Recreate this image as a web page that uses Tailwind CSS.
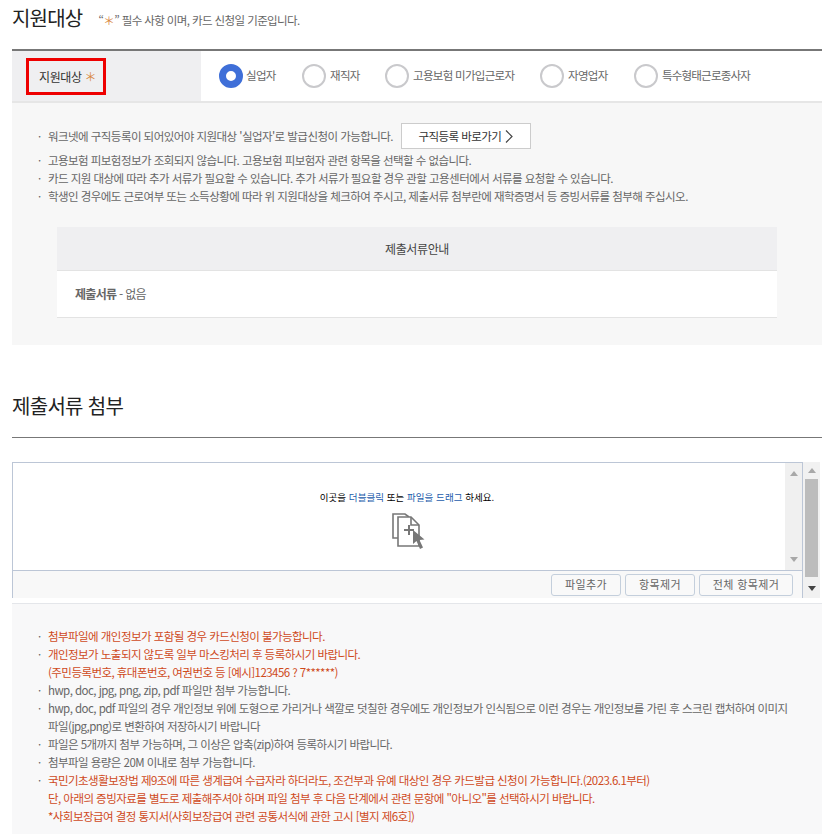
<!DOCTYPE html>
<html lang="ko">
  <head>
    <meta charset="UTF-8" />
    <title>지원대상</title>
    <script src="https://cdn.jsdelivr.net/npm/@tailwindcss/browser@4"></script>
  </head>
  <body class="bg-white font-['Noto_Sans_CJK_KR','Noto_Sans',sans-serif] text-[#666] overflow-hidden">
    <div class="w-[827px] h-[834px] overflow-hidden">
      <!-- 지원대상 -->
      <div class="h-[49px] pl-3 flex">
        <h2 class="text-[20px] leading-[36px] text-[#222] font-normal tracking-[-0.8px]">지원대상</h2>
        <p class="ml-[16px] text-[11.5px] leading-[40px] text-[#666] tracking-[-0.6px]">
          “<span class="text-[#d9883f]">＊</span>” 필수 사항 이며, 카드 신청일 기준입니다.
        </p>
      </div>
      <div class="ml-3 w-[810px] h-[54px] border-t-2 border-b-2 border-t-[#777] border-b-[#e6e6e6] flex">
        <div class="w-[189px] bg-[#efeff1] pl-[14px] pt-[7px]">
          <div class="w-[80px] h-[37px] border-[3px] border-[#ee0000] flex items-center pl-[10px] text-[12px] text-[#333] tracking-[-0.4px]">
            지원대상<span class="ml-[3px] text-[#d9883f]">＊</span>
          </div>
        </div>
        <div class="flex items-center pl-[18px] text-[11.5px] text-[#666] tracking-[-0.7px]">
          <span class="w-6 h-6 rounded-full border-[7px] border-[#3f6fd8] bg-white"></span>
          <span class="ml-[3px] w-[56px]">실업자</span>
          <span class="w-6 h-6 rounded-full border-[2px] border-[#c9c9cc] bg-white"></span>
          <span class="ml-[4px] w-[55px]">재직자</span>
          <span class="w-6 h-6 rounded-full border-[2px] border-[#c9c9cc] bg-white"></span>
          <span class="ml-[4px] w-[127px]">고용보험 미가입근로자</span>
          <span class="w-6 h-6 rounded-full border-[2px] border-[#c9c9cc] bg-white"></span>
          <span class="ml-[4px] w-[66px]">자영업자</span>
          <span class="w-6 h-6 rounded-full border-[2px] border-[#c9c9cc] bg-white"></span>
          <span class="ml-[4px] tracking-[-0.8px]">특수형태근로종사자</span>
        </div>
      </div>
      <div class="ml-3 w-[810px] h-[242px] bg-[#f7f7f7] pt-[20px]">
        <ul class="pl-[25px] text-[11.5px] leading-[18px] text-[#666] tracking-[-0.55px]">
          <li class="flex items-center h-[26px] mb-[2px]">
            <span class="w-[11px] pl-[1px]">·</span>워크넷에 구직등록이 되어있어야 지원대상 '실업자'로 발급신청이 가능합니다.
            <span class="ml-[8px] w-[130px] h-[26px] border border-[#ccc] bg-white flex items-center justify-center text-[#333]">구직등록 바로가기
              <svg class="ml-1" width="8" height="13" viewBox="0 0 8 13" fill="none" stroke="#444" stroke-width="1.2"><path d="M1 .5l6 6-6 6" /></svg>
            </span>
          </li>
          <li class="flex"><span class="w-[11px] pl-[1px]">·</span>고용보험 피보험정보가 조회되지 않습니다. 고용보험 피보험자 관련 항목을 선택할 수 없습니다.</li>
          <li class="flex"><span class="w-[11px] pl-[1px]">·</span>카드 지원 대상에 따라 추가 서류가 필요할 수 있습니다. 추가 서류가 필요할 경우 관할 고용센터에서 서류를 요청할 수 있습니다.</li>
          <li class="flex"><span class="w-[11px] pl-[1px]">·</span>학생인 경우에도 근로여부 또는 소득상황에 따라 위 지원대상을 체크하여 주시고, 제출서류 첨부란에 재학증명서 등 증빙서류를 첨부해 주십시오.</li>
        </ul>
        <div class="ml-[45px] mt-[22px] w-[720px]">
          <div class="h-[44px] bg-[#efeff1] border-b border-[#e3e3e3] flex items-center justify-center text-[12px] text-[#444] tracking-[-0.4px]">제출서류안내</div>
          <div class="h-[47px] bg-white border-b border-[#e3e3e3] flex items-center pl-[18px] text-[12px] text-[#666] tracking-[-0.7px]">
            <b class="font-bold">제출서류</b>&nbsp;- 없음
          </div>
        </div>
      </div>

      <!-- 제출서류 첨부 -->
      <h2 class="mt-[45px] pl-3 text-[20px] leading-[32px] text-[#222] font-normal tracking-[-0.7px]">제출서류 첨부</h2>
      <div class="ml-3 mt-[15px] w-[810px] border-t border-[#777]"></div>

      <div class="ml-3 mt-[24px] w-[808px] h-[142px] flex">
        <div class="w-[791px] h-[136px] border-l border-t border-r border-[#bcc6d6] flex flex-col">
          <div class="h-[107px] flex">
            <div class="flex-1 flex flex-col items-center pt-[28px] pl-4">
              <p class="text-[9.5px] leading-[12px] text-black tracking-[0.05px]">이곳을 <span class="text-[#1c5cab]">더블클릭</span> 또는 <span class="text-[#1c5cab]">파일을 드래그</span> 하세요.</p>
              <svg class="mt-[9px] ml-[3px]" width="36" height="38" viewBox="0 0 36 38" fill="none" stroke="#777" stroke-width="1.6">
                <path d="M7 26H2V2h12l4 3" />
                <path d="M7 5h13l8 8v21H7z" fill="#fff" />
                <path d="M20 5v8h8" />
                <path d="M18 13v10M13 18h10" stroke-width="2" />
                <path d="M22 18l0 14 3.500-3 3.500 8 3-1.500-3.500-7.500 5-.5z" fill="#777" stroke="none" />
              </svg>
            </div>
            <div class="w-[17px] bg-[#f0f0f0] flex flex-col items-center justify-between py-[8px]">
              <span class="w-0 h-0 border-x-[4px] border-x-transparent border-b-[5px] border-b-[#a8a8a8]"></span>
              <span class="w-0 h-0 border-x-[4px] border-x-transparent border-t-[5px] border-t-[#a8a8a8]"></span>
            </div>
          </div>
          <div class="h-[28px] border-t border-[#bcc6d6] bg-[#f8f8f8] flex items-center justify-end gap-[4px] pr-[9px] text-[11px] text-[#666] tracking-[0.4px]">
            <span class="w-[70px] h-[22px] border border-[#c4cfdc] rounded-[3px] bg-[#f9f9f9] flex items-center justify-center">파일추가</span>
            <span class="w-[70px] h-[22px] border border-[#c4cfdc] rounded-[3px] bg-[#f9f9f9] flex items-center justify-center">항목제거</span>
            <span class="w-[94px] h-[22px] border border-[#c4cfdc] rounded-[3px] bg-[#f9f9f9] flex items-center justify-center">전체 항목제거</span>
          </div>
        </div>
        <div class="w-[17px] h-[136px] bg-[#f1f1f1] flex flex-col items-center pt-[6px]">
          <span class="w-0 h-0 border-x-[4px] border-x-transparent border-b-[5px] border-b-[#a8a8a8]"></span>
          <span class="mt-[6px] w-[13px] h-[98px] bg-[#bcbcbc]"></span>
          <span class="mt-[9px] w-0 h-0 border-x-[4px] border-x-transparent border-t-[5px] border-t-[#444]"></span>
        </div>
      </div>

      <div class="ml-3 -mt-[1px] w-[810px] h-[232px] bg-[#f8f8f9] border-t border-[#e4e6ea] pt-[23px] pl-[25px] text-[11.5px] leading-[18px] tracking-[-0.55px] text-[#666]">
        <p class="flex"><span class="w-[11px] pl-[1px]">·</span><span class="text-[#cf4a1c]">첨부파일에 개인정보가 포함될 경우 카드신청이 불가능합니다.</span></p>
        <p class="flex"><span class="w-[11px] pl-[1px]">·</span><span class="text-[#cf4a1c]">개인정보가 노출되지 않도록 일부 마스킹처리 후 등록하시기 바랍니다.</span></p>
        <p class="pl-[11px] text-[#cf4a1c]">(주민등록번호, 휴대폰번호, 여권번호 등 [예시]123456 ? 7******)</p>
        <p class="flex"><span class="w-[11px] pl-[1px]">·</span>hwp, doc, jpg, png, zip, pdf 파일만 첨부 가능합니다.</p>
        <p class="flex"><span class="w-[11px] pl-[1px]">·</span>hwp, doc, pdf 파일의 경우 개인정보 위에 도형으로 가리거나 색깔로 덧칠한 경우에도 개인정보가 인식됨으로 이런 경우는 개인정보를 가린 후 스크린 캡처하여 이미지</p>
        <p class="pl-[11px]">파일(jpg,png)로 변환하여 저장하시기 바랍니다</p>
        <p class="flex"><span class="w-[11px] pl-[1px]">·</span>파일은 5개까지 첨부 가능하며, 그 이상은 압축(zip)하여 등록하시기 바랍니다.</p>
        <p class="flex"><span class="w-[11px] pl-[1px]">·</span>첨부파일 용량은 20M 이내로 첨부 가능합니다.</p>
        <p class="flex"><span class="w-[11px] pl-[1px]">·</span><span class="text-[#cf4a1c]">국민기초생활보장법 제9조에 따른 생계급여 수급자라 하더라도, 조건부과 유예 대상인 경우 카드발급 신청이 가능합니다.(2023.6.1부터)</span></p>
        <p class="pl-[11px] text-[#cf4a1c]">단, 아래의 증빙자료를 별도로 제출해주셔야 하며 파일 첨부 후 다음 단계에서 관련 문항에 "아니오"를 선택하시기 바랍니다.</p>
        <p class="pl-[11px] text-[#cf4a1c]">*사회보장급여 결정 통지서(사회보장급여 관련 공통서식에 관한 고시 [별지 제6호])</p>
      </div>
    </div>
  </body>
</html>
